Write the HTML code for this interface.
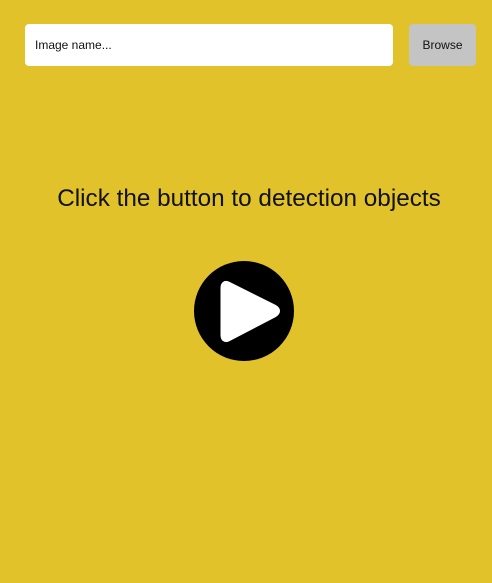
<!DOCTYPE html>
<html><head><style>
body{margin:0;width:492px;height:583px;background:#e1c22b;font-family:"Liberation Sans",sans-serif;position:relative;overflow:hidden}
.in{position:absolute;left:25px;top:24px;width:368px;height:42px;background:#fff;border-radius:4px;font-size:12px;line-height:43px;padding-left:10px;box-sizing:border-box;color:#111}
.br{position:absolute;left:409px;top:24px;width:67px;height:42px;background:#c4c4c4;border-radius:4px;font-size:12px;line-height:43px;text-align:center;color:#111}
h1{position:absolute;left:0;width:498px;top:185px;margin:0;font-weight:normal;font-size:24.3px;text-align:center;color:#111}
svg{position:absolute;left:194px;top:261px}
</style></head><body>
<div class="in">Image name...</div>
<div class="br">Browse</div>
<h1>Click the button to detection objects</h1>
<svg width="100" height="100" viewBox="0 0 100 100"><circle cx="50" cy="50" r="50" fill="#000"/>
<path d="M34 24 Q30 22 30 27 L30 74 Q30 79 34 77 L80 53 Q85 50 80 47 Z" fill="#fff" stroke="#fff" stroke-width="7" stroke-linejoin="round"/></svg>
</body></html>
